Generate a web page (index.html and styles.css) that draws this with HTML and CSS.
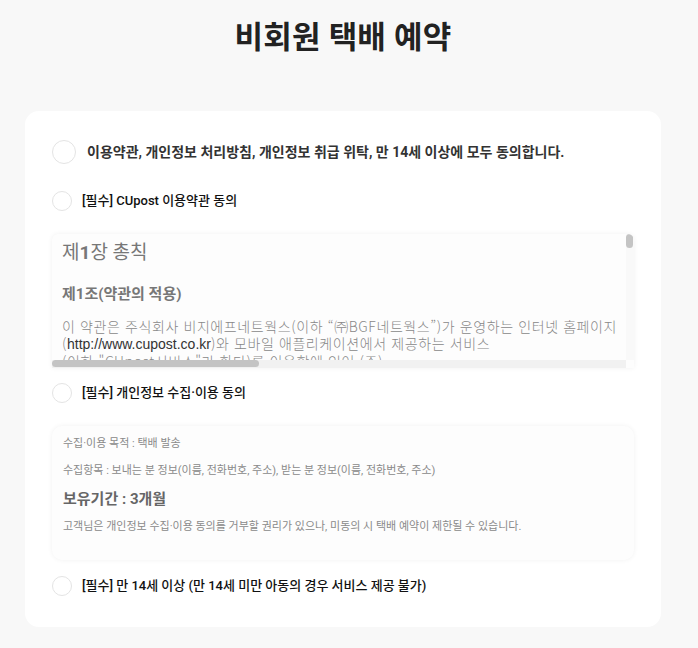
FILE: index.html
```html
<!DOCTYPE html>
<html lang="ko">
<head>
<meta charset="UTF-8">
<meta name="viewport" content="width=device-width, initial-scale=1.0">
<title>비회원 택배 예약</title>
<link rel="stylesheet" href="styles.css">
</head>
<body>
<div class="page">
    <h1 class="title">비회원 택배 예약</h1>

    <div class="card">
        <div class="agree agree-all">
            <span class="check"></span>
            <span>이용약관, 개인정보 처리방침, 개인정보 취급 위탁, 만 14세 이상에 모두 동의합니다.</span>
        </div>

        <div class="agree agree-terms">
            <span class="check"></span>
            <span>[필수] CUpost 이용약관 동의</span>
        </div>

        <div class="terms">
            <div class="terms-body">
                <h3>제<b>1</b>장 총칙</h3>
                <h4>제1조(약관의 적용)</h4>
                <p>이 약관은 주식회사 비지에프네트웍스(이하 “㈜BGF네트웍스”)가 운영하는 인터넷 홈페이지<br>
                (<a href="#">http://www.cupost.co.kr</a>)와 모바일 애플리케이션에서 제공하는 서비스<br>
                (이하 "CUpost서비스"라 한다)를 이용함에 있어 (주)<br>
                BGF네트웍스와 이용자의 권리, 의무 및 책임사항을 규정함을 목적으로 합니다.</p>

                <h4>제2조(용어의 정의)</h4>
                <p>1. "택배"란 고객의 요청에 따라 운송물을 수탁하여 수하인에게 인도하는 것을 말합니다.<br>
                2. "고객"이란 ㈜BGF네트웍스에 택배를 위탁하는 자를 말합니다.</p>
            </div>
            <!-- scrollbars drawn over the box -->
            <div class="track-v"><span class="thumb-v"></span></div>
            <div class="track-h"><span class="thumb-h"></span></div>
        </div>

        <div class="agree agree-privacy">
            <span class="check"></span>
            <span>[필수] 개인정보 수집·이용 동의</span>
        </div>

        <div class="privacy">
            <p>수집·이용 목적 : 택배 발송</p>
            <p>수집항목 : 보내는 분 정보(이름, 전화번호, 주소), 받는 분 정보(이름, 전화번호, 주소)</p>
            <p class="period">보유기간 : 3개월</p>
            <p>고객님은 개인정보 수집·이용 동의를 거부할 권리가 있으나, 미동의 시 택배 예약이 제한될 수 있습니다.</p>
        </div>

        <div class="agree agree-age">
            <span class="check"></span>
            <span>[필수] 만 14세 이상 (만 14세 미만 아동의 경우 서비스 제공 불가)</span>
        </div>
    </div>
</div>
</body>
</html>
```

FILE: styles.css
```css
body {
    margin: 0;
    background-color: #f8f8f8;
    font-family: Roboto, "Noto Sans CJK KR", sans-serif;
}
.page {
    padding: 0 37px 21px 25px;
}
.title {
    margin: 0 0 51px;
    padding-top: 16px;
    font-size: 31px;
    line-height: 44px;
    font-weight: 700;
    letter-spacing: 0.2px;
    text-align: center;
    color: #222;
}
.card {
    background-color: #fff;
    border-radius: 14px;
    padding: 29px 27px 31px;
}
.agree {
    display: flex;
    align-items: center;
    height: 20px;
    font-size: 13px;
    line-height: 20px;
    font-weight: 500;
    color: #111;
}
.check {
    flex: none;
    width: 20px;
    height: 20px;
    margin-right: 10px;
    border: 1px solid #e4e4e4;
    border-radius: 50%;
    box-sizing: border-box;
    background-color: #fff;
}
.agree-all {
    height: 24px;
    font-size: 14px;
    font-weight: 700;
    color: #333;
}
.agree-all .check {
    width: 24px;
    height: 24px;
    margin-right: 11px;
}
.agree-terms {
    margin-top: 27px;
}
.agree-privacy {
    margin-top: 15px;
}
.agree-age {
    margin-top: 16px;
}

/* terms box */
.terms {
    position: relative;
    height: 134px;
    margin-top: 23px;
    overflow: hidden;
    background-color: #fdfdfd;
    border-radius: 6px 6px 0 0;
    box-shadow: 0 0 5px rgba(0, 0, 0, 0.06);
    color: #888;
}
.terms-body {
    height: 126px;
    margin-right: 8px;
    padding: 0 10px;
    overflow: hidden;
}
.track-v {
    position: absolute;
    top: 0;
    right: 0;
    width: 8px;
    height: 126px;
    background-color: #f9f9f9;
}
.thumb-v {
    display: block;
    width: 7px;
    height: 14px;
    border-radius: 4px;
    background-color: #c4c4c4;
}
.track-h {
    position: absolute;
    left: 0;
    right: 8px;
    bottom: 0;
    height: 8px;
    background-color: #f1f1f1;
}
.thumb-h {
    display: block;
    width: 207px;
    height: 7px;
    border-radius: 4px;
    background-color: #c4c4c4;
}
.terms h3 {
    margin: 7px 0 0;
    font-size: 19px;
    line-height: 24px;
    font-weight: 400;
    color: #777;
}
.terms h3 b {
    font-weight: 700;
}
.terms h4 {
    margin: 19px 0 0;
    font-size: 15px;
    line-height: 20px;
    font-weight: 700;
    color: #777;
}
.terms p {
    margin: 14px 0 0;
    font-family: "Noto Sans CJK KR", sans-serif;
    font-size: 14px;
    line-height: 17px;
    font-weight: 300;
    letter-spacing: 0.6px;
    white-space: nowrap;
}
.terms a {
    font-family: "Liberation Sans", Arial, sans-serif;
    letter-spacing: 0;
    color: #333;
    text-decoration: none;
}

/* privacy box */
.privacy {
    height: 134px;
    margin-top: 23px;
    padding: 10px 11px 0;
    box-sizing: border-box;
    background-color: #fdfdfd;
    border-radius: 10px;
    box-shadow: 0 0 5px rgba(0, 0, 0, 0.06);
    color: #8a8a8a;
}
.privacy p {
    margin: 11px 0 0;
    font-size: 11px;
    line-height: 16px;
}
.privacy p:first-child {
    margin-top: 0;
}
.privacy .period {
    margin-top: 9px;
    font-size: 15px;
    line-height: 22px;
    font-weight: 700;
    color: #666;
}
.privacy .period + p {
    margin-top: 9px;
}
```
